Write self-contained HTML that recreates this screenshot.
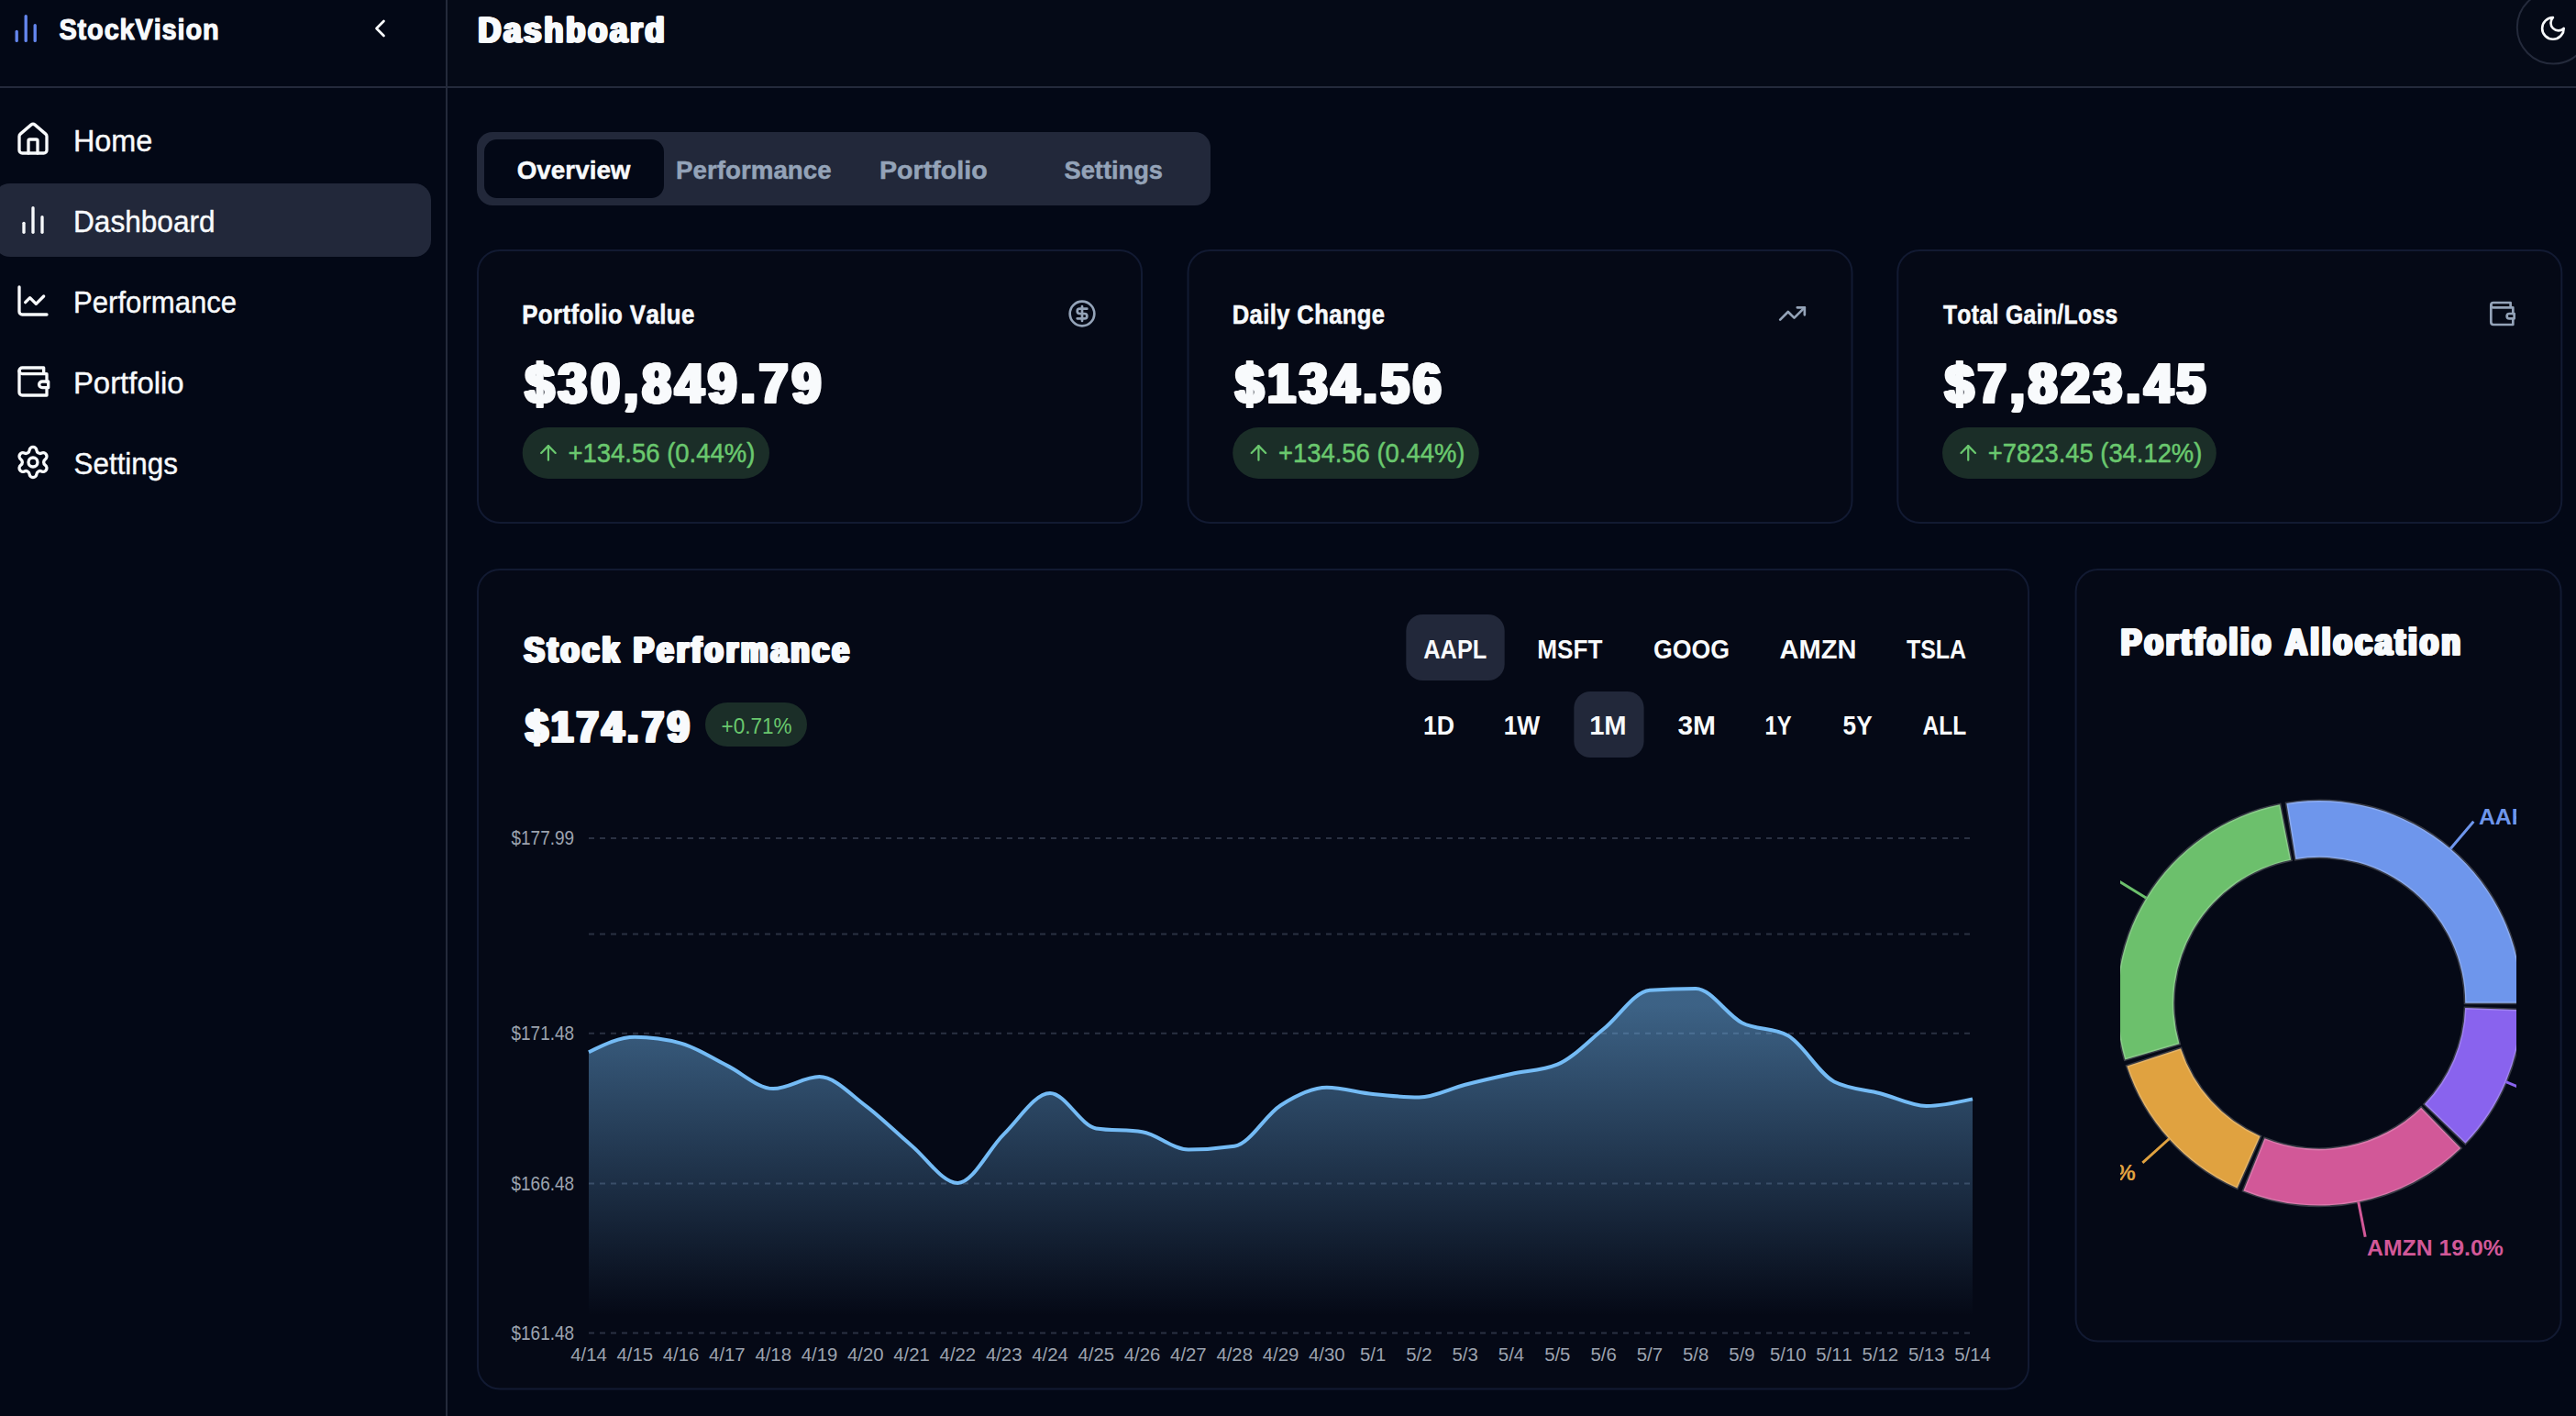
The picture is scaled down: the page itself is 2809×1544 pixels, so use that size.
<!DOCTYPE html>
<html><head><meta charset="utf-8"><title>StockVision Dashboard</title>
<style>html,body{margin:0;padding:0;background:#030816;width:2809px;height:1544px;overflow:hidden}</style>
</head><body>
<svg width="2809" height="1544" viewBox="0 0 2809 1544" style="display:block;font-family:'Liberation Sans', sans-serif;font-kerning:none">
<rect x="0" y="0" width="2809" height="1544" fill="#030816"/>
<rect x="488" y="0" width="2321" height="94" fill="#050a17"/>
<rect x="0" y="94" width="2809" height="2" fill="#242a3b"/>
<rect x="486" y="0" width="2" height="1544" fill="#242a3b"/>
<g transform="translate(8.20 11.10) scale(1.6667)" fill="none" stroke="#6486ee" stroke-width="2.00" stroke-linecap="round" stroke-linejoin="round"><path d="M18 20V10"/><path d="M12 20V4"/><path d="M6 20v-6"/></g>
<text transform="translate(64.47 43.40) scale(0.8967 1)" font-size="32.27" font-weight="bold" fill="#f8fafc" stroke="#f8fafc" stroke-width="1.20" stroke-linejoin="round" letter-spacing="0.96">StockVision</text>
<g transform="translate(398.50 15.00) scale(1.3333)" fill="none" stroke="#f8fafc" stroke-width="2.00" stroke-linecap="round" stroke-linejoin="round"><path d="m15 18-6-6 6-6"/></g>
<text transform="translate(520.30 46.40) scale(0.8758 1)" font-size="39.24" font-weight="bold" fill="#f8fafc" stroke="#f8fafc" stroke-width="1.20" stroke-linejoin="round" letter-spacing="3.36">Dashboard</text>
<text transform="translate(521.10 46.40) scale(0.8758 1)" font-size="39.24" font-weight="bold" fill="#f8fafc" stroke="#f8fafc" stroke-width="1.20" stroke-linejoin="round" letter-spacing="3.36">Dashboard</text>
<text transform="translate(521.90 46.40) scale(0.8758 1)" font-size="39.24" font-weight="bold" fill="#f8fafc" stroke="#f8fafc" stroke-width="1.20" stroke-linejoin="round" letter-spacing="3.36">Dashboard</text>
<text transform="translate(522.70 46.40) scale(0.8758 1)" font-size="39.24" font-weight="bold" fill="#f8fafc" stroke="#f8fafc" stroke-width="1.20" stroke-linejoin="round" letter-spacing="3.36">Dashboard</text>
<circle cx="2784.3" cy="30" r="39.5" fill="#050a17" stroke="#242a3b" stroke-width="2"/>
<g transform="translate(2768.20 15.20) scale(1.3100)" fill="none" stroke="#f8fafc" stroke-width="2.00" stroke-linecap="round" stroke-linejoin="round"><path d="M12 3a6 6 0 0 0 9 9 9 9 0 1 1-9-9Z"/></g>
<rect x="-7" y="200" width="477" height="80" rx="18" fill="#22283a"/>
<g transform="translate(16.00 132.00) scale(1.6667)" fill="none" stroke="#f8fafc" stroke-width="2.00" stroke-linecap="round" stroke-linejoin="round"><path d="M15 21v-8a1 1 0 0 0-1-1h-4a1 1 0 0 0-1 1v8"/><path d="M3 10a2 2 0 0 1 .709-1.528l7-5.999a2 2 0 0 1 2.582 0l7 5.999A2 2 0 0 1 21 10v9a2 2 0 0 1-2 2H5a2 2 0 0 1-2-2z"/></g>
<text transform="translate(79.94 165.10) scale(0.9688 1)" font-size="33.43" font-weight="normal" fill="#f8fafc" stroke="#f8fafc" stroke-width="0.40" stroke-linejoin="round">Home</text>
<g transform="translate(16.00 220.00) scale(1.6667)" fill="none" stroke="#f8fafc" stroke-width="2.00" stroke-linecap="round" stroke-linejoin="round"><path d="M18 20V10"/><path d="M12 20V4"/><path d="M6 20v-6"/></g>
<text transform="translate(80.01 252.60) scale(0.9455 1)" font-size="33.43" font-weight="normal" fill="#f8fafc" stroke="#f8fafc" stroke-width="0.40" stroke-linejoin="round">Dashboard</text>
<g transform="translate(16.00 308.00) scale(1.6667)" fill="none" stroke="#f8fafc" stroke-width="2.00" stroke-linecap="round" stroke-linejoin="round"><path d="M3 3v16a2 2 0 0 0 2 2h16"/><path d="m19 9-5 5-4-4-3 3"/></g>
<text transform="translate(80.05 341.00) scale(0.9308 1)" font-size="33.43" font-weight="normal" fill="#f8fafc" stroke="#f8fafc" stroke-width="0.40" stroke-linejoin="round">Performance</text>
<g transform="translate(16.00 396.00) scale(1.6667)" fill="none" stroke="#f8fafc" stroke-width="2.00" stroke-linecap="round" stroke-linejoin="round"><path d="M21 12V7H5a2 2 0 0 1 0-4h14v4"/><path d="M3 5v14a2 2 0 0 0 2 2h16v-5"/><path d="M18 12a2 2 0 0 0 0 4h4v-4Z"/></g>
<text transform="translate(79.90 428.80) scale(0.9849 1)" font-size="33.43" font-weight="normal" fill="#f8fafc" stroke="#f8fafc" stroke-width="0.40" stroke-linejoin="round">Portfolio</text>
<g transform="translate(16.00 484.00) scale(1.6667)" fill="none" stroke="#f8fafc" stroke-width="2.00" stroke-linecap="round" stroke-linejoin="round"><path d="M9.671 4.136a2.34 2.34 0 0 1 4.659 0 2.34 2.34 0 0 0 3.319 1.915 2.34 2.34 0 0 1 2.33 4.033 2.34 2.34 0 0 0 0 3.831 2.34 2.34 0 0 1-2.33 4.033 2.34 2.34 0 0 0-3.319 1.915 2.34 2.34 0 0 1-4.659 0 2.34 2.34 0 0 0-3.32-1.915 2.34 2.34 0 0 1-2.33-4.033 2.34 2.34 0 0 0 0-3.831A2.34 2.34 0 0 1 6.35 6.051a2.34 2.34 0 0 0 3.319-1.915"/><circle cx="12" cy="12" r="3"/></g>
<text transform="translate(80.58 516.80) scale(0.9384 1)" font-size="33.43" font-weight="normal" fill="#f8fafc" stroke="#f8fafc" stroke-width="0.40" stroke-linejoin="round">Settings</text>
<rect x="520" y="144" width="800" height="80" rx="17" fill="#22283a"/>
<rect x="528" y="152" width="196" height="64" rx="14" fill="#030816"/>
<text transform="translate(563.71 194.55) scale(0.9778 1)" font-size="28.49" font-weight="bold" fill="#f8fafc" stroke="#f8fafc" stroke-width="0.50" stroke-linejoin="round">Overview</text>
<text transform="translate(737.09 194.55) scale(0.9738 1)" font-size="28.49" font-weight="bold" fill="#94a3b8" stroke="#94a3b8" stroke-width="0.50" stroke-linejoin="round">Performance</text>
<text transform="translate(958.93 194.55) scale(1.0063 1)" font-size="28.49" font-weight="bold" fill="#94a3b8" stroke="#94a3b8" stroke-width="0.50" stroke-linejoin="round">Portfolio</text>
<text transform="translate(1160.46 194.55) scale(0.9575 1)" font-size="28.49" font-weight="bold" fill="#94a3b8" stroke="#94a3b8" stroke-width="0.50" stroke-linejoin="round">Settings</text>
<rect x="521.0" y="273" width="724" height="297" rx="24" fill="#050916" stroke="#121a32" stroke-width="2"/>
<text transform="translate(569.17 352.90) scale(0.8976 1)" font-size="28.78" font-weight="bold" fill="#f8fafc" stroke="#f8fafc" stroke-width="0.60" stroke-linejoin="round" letter-spacing="0.48">Portfolio Value</text>
<text transform="translate(571.16 439.10) scale(0.9142 1)" font-size="61.34" font-weight="bold" fill="#f8fafc" stroke="#f8fafc" stroke-width="1.80" stroke-linejoin="round" letter-spacing="5.04">$30,849.79</text>
<text transform="translate(571.88 439.10) scale(0.9142 1)" font-size="61.34" font-weight="bold" fill="#f8fafc" stroke="#f8fafc" stroke-width="1.80" stroke-linejoin="round" letter-spacing="5.04">$30,849.79</text>
<text transform="translate(572.60 439.10) scale(0.9142 1)" font-size="61.34" font-weight="bold" fill="#f8fafc" stroke="#f8fafc" stroke-width="1.80" stroke-linejoin="round" letter-spacing="5.04">$30,849.79</text>
<text transform="translate(573.32 439.10) scale(0.9142 1)" font-size="61.34" font-weight="bold" fill="#f8fafc" stroke="#f8fafc" stroke-width="1.80" stroke-linejoin="round" letter-spacing="5.04">$30,849.79</text>
<text transform="translate(574.04 439.10) scale(0.9142 1)" font-size="61.34" font-weight="bold" fill="#f8fafc" stroke="#f8fafc" stroke-width="1.80" stroke-linejoin="round" letter-spacing="5.04">$30,849.79</text>
<text transform="translate(574.76 439.10) scale(0.9142 1)" font-size="61.34" font-weight="bold" fill="#f8fafc" stroke="#f8fafc" stroke-width="1.80" stroke-linejoin="round" letter-spacing="5.04">$30,849.79</text>
<rect x="569.7" y="466" width="269.3" height="56" rx="28" fill="#1b2e28"/>
<g transform="translate(584.60 480.60) scale(1.1111)" fill="none" stroke="#6ac86e" stroke-width="2.00" stroke-linecap="round" stroke-linejoin="round"><path d="m5 12 7-7 7 7"/><path d="M12 19V5"/></g>
<text transform="translate(619.51 504.25) scale(0.9453 1)" font-size="29.07" font-weight="normal" fill="#6ac86e" stroke="#6ac86e" stroke-width="0.50" stroke-linejoin="round">+134.56 (0.44%)</text>
<g transform="translate(1164.00 326.00) scale(1.3333)" fill="none" stroke="#94a3b8" stroke-width="2.00" stroke-linecap="round" stroke-linejoin="round"><circle cx="12" cy="12" r="10"/><path d="M16 8h-6a2 2 0 1 0 0 4h4a2 2 0 1 1 0 4H8"/><path d="M12 18V6"/></g>
<rect x="1295.5" y="273" width="724" height="297" rx="24" fill="#050916" stroke="#121a32" stroke-width="2"/>
<text transform="translate(1343.69 352.90) scale(0.8864 1)" font-size="28.78" font-weight="bold" fill="#f8fafc" stroke="#f8fafc" stroke-width="0.60" stroke-linejoin="round" letter-spacing="0.48">Daily Change</text>
<text transform="translate(1345.68 439.10) scale(0.8882 1)" font-size="61.34" font-weight="bold" fill="#f8fafc" stroke="#f8fafc" stroke-width="1.80" stroke-linejoin="round" letter-spacing="5.04">$134.56</text>
<text transform="translate(1346.40 439.10) scale(0.8882 1)" font-size="61.34" font-weight="bold" fill="#f8fafc" stroke="#f8fafc" stroke-width="1.80" stroke-linejoin="round" letter-spacing="5.04">$134.56</text>
<text transform="translate(1347.12 439.10) scale(0.8882 1)" font-size="61.34" font-weight="bold" fill="#f8fafc" stroke="#f8fafc" stroke-width="1.80" stroke-linejoin="round" letter-spacing="5.04">$134.56</text>
<text transform="translate(1347.84 439.10) scale(0.8882 1)" font-size="61.34" font-weight="bold" fill="#f8fafc" stroke="#f8fafc" stroke-width="1.80" stroke-linejoin="round" letter-spacing="5.04">$134.56</text>
<text transform="translate(1348.56 439.10) scale(0.8882 1)" font-size="61.34" font-weight="bold" fill="#f8fafc" stroke="#f8fafc" stroke-width="1.80" stroke-linejoin="round" letter-spacing="5.04">$134.56</text>
<text transform="translate(1349.28 439.10) scale(0.8882 1)" font-size="61.34" font-weight="bold" fill="#f8fafc" stroke="#f8fafc" stroke-width="1.80" stroke-linejoin="round" letter-spacing="5.04">$134.56</text>
<rect x="1344.2" y="466" width="268.6" height="56" rx="28" fill="#1b2e28"/>
<g transform="translate(1359.10 480.60) scale(1.1111)" fill="none" stroke="#6ac86e" stroke-width="2.00" stroke-linecap="round" stroke-linejoin="round"><path d="m5 12 7-7 7 7"/><path d="M12 19V5"/></g>
<text transform="translate(1394.01 504.25) scale(0.9429 1)" font-size="29.07" font-weight="normal" fill="#6ac86e" stroke="#6ac86e" stroke-width="0.50" stroke-linejoin="round">+134.56 (0.44%)</text>
<g transform="translate(1938.50 326.00) scale(1.3333)" fill="none" stroke="#94a3b8" stroke-width="2.00" stroke-linecap="round" stroke-linejoin="round"><path d="M22 7 13.5 15.5 8.5 10.5 2 17"/><path d="M16 7h6v6"/></g>
<rect x="2069.3" y="273" width="724" height="297" rx="24" fill="#050916" stroke="#121a32" stroke-width="2"/>
<text transform="translate(2118.92 352.90) scale(0.8558 1)" font-size="28.78" font-weight="bold" fill="#f8fafc" stroke="#f8fafc" stroke-width="0.60" stroke-linejoin="round" letter-spacing="0.48">Total Gain/Loss</text>
<text transform="translate(2119.47 439.10) scale(0.9054 1)" font-size="61.34" font-weight="bold" fill="#f8fafc" stroke="#f8fafc" stroke-width="1.80" stroke-linejoin="round" letter-spacing="5.04">$7,823.45</text>
<text transform="translate(2120.19 439.10) scale(0.9054 1)" font-size="61.34" font-weight="bold" fill="#f8fafc" stroke="#f8fafc" stroke-width="1.80" stroke-linejoin="round" letter-spacing="5.04">$7,823.45</text>
<text transform="translate(2120.91 439.10) scale(0.9054 1)" font-size="61.34" font-weight="bold" fill="#f8fafc" stroke="#f8fafc" stroke-width="1.80" stroke-linejoin="round" letter-spacing="5.04">$7,823.45</text>
<text transform="translate(2121.63 439.10) scale(0.9054 1)" font-size="61.34" font-weight="bold" fill="#f8fafc" stroke="#f8fafc" stroke-width="1.80" stroke-linejoin="round" letter-spacing="5.04">$7,823.45</text>
<text transform="translate(2122.35 439.10) scale(0.9054 1)" font-size="61.34" font-weight="bold" fill="#f8fafc" stroke="#f8fafc" stroke-width="1.80" stroke-linejoin="round" letter-spacing="5.04">$7,823.45</text>
<text transform="translate(2123.07 439.10) scale(0.9054 1)" font-size="61.34" font-weight="bold" fill="#f8fafc" stroke="#f8fafc" stroke-width="1.80" stroke-linejoin="round" letter-spacing="5.04">$7,823.45</text>
<rect x="2118.0" y="466" width="298.8" height="56" rx="28" fill="#1b2e28"/>
<g transform="translate(2132.90 480.60) scale(1.1111)" fill="none" stroke="#6ac86e" stroke-width="2.00" stroke-linecap="round" stroke-linejoin="round"><path d="m5 12 7-7 7 7"/><path d="M12 19V5"/></g>
<text transform="translate(2167.81 504.25) scale(0.9417 1)" font-size="29.07" font-weight="normal" fill="#6ac86e" stroke="#6ac86e" stroke-width="0.50" stroke-linejoin="round">+7823.45 (34.12%)</text>
<g transform="translate(2712.30 326.00) scale(1.3333)" fill="none" stroke="#94a3b8" stroke-width="2.00" stroke-linecap="round" stroke-linejoin="round"><path d="M21 12V7H5a2 2 0 0 1 0-4h14v4"/><path d="M3 5v14a2 2 0 0 0 2 2h16v-5"/><path d="M18 12a2 2 0 0 0 0 4h4v-4Z"/></g>
<rect x="521" y="621" width="1691" height="893.5" rx="24" fill="#050916" stroke="#121a32" stroke-width="2"/>
<text transform="translate(570.35 721.60) scale(0.8306 1)" font-size="39.54" font-weight="bold" fill="#f8fafc" stroke="#f8fafc" stroke-width="1.40" stroke-linejoin="round" letter-spacing="4.12">Stock Performance</text>
<text transform="translate(571.10 721.60) scale(0.8306 1)" font-size="39.54" font-weight="bold" fill="#f8fafc" stroke="#f8fafc" stroke-width="1.40" stroke-linejoin="round" letter-spacing="4.12">Stock Performance</text>
<text transform="translate(571.85 721.60) scale(0.8306 1)" font-size="39.54" font-weight="bold" fill="#f8fafc" stroke="#f8fafc" stroke-width="1.40" stroke-linejoin="round" letter-spacing="4.12">Stock Performance</text>
<text transform="translate(572.60 721.60) scale(0.8306 1)" font-size="39.54" font-weight="bold" fill="#f8fafc" stroke="#f8fafc" stroke-width="1.40" stroke-linejoin="round" letter-spacing="4.12">Stock Performance</text>
<text transform="translate(573.35 721.60) scale(0.8306 1)" font-size="39.54" font-weight="bold" fill="#f8fafc" stroke="#f8fafc" stroke-width="1.40" stroke-linejoin="round" letter-spacing="4.12">Stock Performance</text>
<text transform="translate(571.94 809.20) scale(0.9003 1)" font-size="47.24" font-weight="bold" fill="#f8fafc" stroke="#f8fafc" stroke-width="1.60" stroke-linejoin="round" letter-spacing="4.48">$174.79</text>
<text transform="translate(572.74 809.20) scale(0.9003 1)" font-size="47.24" font-weight="bold" fill="#f8fafc" stroke="#f8fafc" stroke-width="1.60" stroke-linejoin="round" letter-spacing="4.48">$174.79</text>
<text transform="translate(573.54 809.20) scale(0.9003 1)" font-size="47.24" font-weight="bold" fill="#f8fafc" stroke="#f8fafc" stroke-width="1.60" stroke-linejoin="round" letter-spacing="4.48">$174.79</text>
<text transform="translate(574.34 809.20) scale(0.9003 1)" font-size="47.24" font-weight="bold" fill="#f8fafc" stroke="#f8fafc" stroke-width="1.60" stroke-linejoin="round" letter-spacing="4.48">$174.79</text>
<text transform="translate(575.14 809.20) scale(0.9003 1)" font-size="47.24" font-weight="bold" fill="#f8fafc" stroke="#f8fafc" stroke-width="1.60" stroke-linejoin="round" letter-spacing="4.48">$174.79</text>
<rect x="769" y="766" width="111" height="48" rx="24" fill="#1b2e28"/>
<text transform="translate(786.60 799.80) scale(0.9517 1)" font-size="23.69" font-weight="normal" fill="#6ac86e">+0.71%</text>
<rect x="1533.3" y="670" width="107.4" height="72" rx="18" fill="#22283a"/>
<text transform="translate(1552.27 717.50) scale(0.8562 1)" font-size="29.65" font-weight="bold" fill="#f8fafc">AAPL</text>
<text transform="translate(1676.25 717.50) scale(0.8814 1)" font-size="29.65" font-weight="bold" fill="#f8fafc">MSFT</text>
<text transform="translate(1803.00 717.50) scale(0.9013 1)" font-size="29.65" font-weight="bold" fill="#f8fafc">GOOG</text>
<text transform="translate(1940.58 717.50) scale(0.9795 1)" font-size="29.65" font-weight="bold" fill="#f8fafc">AMZN</text>
<text transform="translate(2078.92 717.50) scale(0.8427 1)" font-size="29.65" font-weight="bold" fill="#f8fafc">TSLA</text>
<rect x="1716.3" y="754" width="76.3" height="72" rx="18" fill="#22283a"/>
<text transform="translate(1552.02 801.40) scale(0.9131 1)" font-size="29.22" font-weight="bold" fill="#f8fafc">1D</text>
<text transform="translate(1639.63 801.40) scale(0.9057 1)" font-size="29.22" font-weight="bold" fill="#f8fafc">1W</text>
<text transform="translate(1733.16 801.40) scale(0.9975 1)" font-size="29.22" font-weight="bold" fill="#f8fafc">1M</text>
<text transform="translate(1829.41 801.40) scale(1.0248 1)" font-size="29.22" font-weight="bold" fill="#f8fafc">3M</text>
<text transform="translate(1924.50 801.40) scale(0.8168 1)" font-size="29.22" font-weight="bold" fill="#f8fafc">1Y</text>
<text transform="translate(2009.59 801.40) scale(0.8962 1)" font-size="29.22" font-weight="bold" fill="#f8fafc">5Y</text>
<text transform="translate(2096.59 801.40) scale(0.8393 1)" font-size="29.22" font-weight="bold" fill="#f8fafc">ALL</text>
<defs><linearGradient id="fillg" x1="0" y1="1076.9" x2="0" y2="1453.6" gradientUnits="userSpaceOnUse"><stop offset="0.05" stop-color="#74bbf5" stop-opacity="0.5"/><stop offset="0.95" stop-color="#74bbf5" stop-opacity="0"/></linearGradient></defs>
<line x1="642" y1="913.9" x2="2151" y2="913.9" stroke="#2a3142" stroke-width="2" stroke-dasharray="6 6"/>
<line x1="642" y1="1018.5" x2="2151" y2="1018.5" stroke="#2a3142" stroke-width="2" stroke-dasharray="6 6"/>
<line x1="642" y1="1126.8" x2="2151" y2="1126.8" stroke="#2a3142" stroke-width="2" stroke-dasharray="6 6"/>
<line x1="642" y1="1290.5" x2="2151" y2="1290.5" stroke="#2a3142" stroke-width="2" stroke-dasharray="6 6"/>
<line x1="642" y1="1453.6" x2="2151" y2="1453.6" stroke="#2a3142" stroke-width="2" stroke-dasharray="6 6"/>
<path d="M642.00,1147.30C658.77,1139.05 675.53,1130.80 692.30,1130.80C709.07,1130.80 725.83,1133.07 742.60,1137.60C759.37,1142.13 776.13,1153.65 792.90,1161.90C809.67,1170.15 826.43,1187.10 843.20,1187.10C859.97,1187.10 876.73,1174.10 893.50,1174.10C910.27,1174.10 927.03,1193.08 943.80,1205.60C960.57,1218.12 977.33,1235.13 994.10,1249.20C1010.87,1263.27 1027.63,1290.00 1044.40,1290.00C1061.17,1290.00 1077.93,1252.93 1094.70,1236.60C1111.47,1220.27 1128.23,1192.00 1145.00,1192.00C1161.77,1192.00 1178.53,1227.80 1195.30,1230.40C1212.07,1233.00 1228.83,1231.70 1245.60,1234.30C1262.37,1236.90 1279.13,1253.50 1295.90,1253.50C1312.67,1253.50 1329.43,1252.27 1346.20,1249.80C1362.97,1247.33 1379.73,1215.87 1396.50,1205.20C1413.27,1194.53 1430.03,1185.80 1446.80,1185.80C1463.57,1185.80 1480.33,1191.22 1497.10,1193.00C1513.87,1194.78 1530.63,1196.50 1547.40,1196.50C1564.17,1196.50 1580.93,1186.95 1597.70,1182.70C1614.47,1178.45 1631.23,1174.67 1648.00,1171.00C1664.77,1167.33 1681.53,1167.57 1698.30,1160.70C1715.07,1153.83 1731.83,1135.48 1748.60,1122.00C1765.37,1108.52 1782.13,1081.07 1798.90,1079.80C1815.67,1078.53 1832.43,1077.90 1849.20,1077.90C1865.97,1077.90 1882.73,1106.63 1899.50,1115.20C1916.27,1123.77 1933.03,1119.90 1949.80,1129.30C1966.57,1138.70 1983.33,1171.03 2000.10,1179.50C2016.87,1187.97 2033.63,1187.78 2050.40,1192.20C2067.17,1196.62 2083.93,1206.00 2100.70,1206.00C2117.47,1206.00 2134.23,1202.20 2151.00,1198.40 L2151.00,1453.60 L642.00,1453.60 Z" fill="url(#fillg)"/>
<path d="M642.00,1147.30C658.77,1139.05 675.53,1130.80 692.30,1130.80C709.07,1130.80 725.83,1133.07 742.60,1137.60C759.37,1142.13 776.13,1153.65 792.90,1161.90C809.67,1170.15 826.43,1187.10 843.20,1187.10C859.97,1187.10 876.73,1174.10 893.50,1174.10C910.27,1174.10 927.03,1193.08 943.80,1205.60C960.57,1218.12 977.33,1235.13 994.10,1249.20C1010.87,1263.27 1027.63,1290.00 1044.40,1290.00C1061.17,1290.00 1077.93,1252.93 1094.70,1236.60C1111.47,1220.27 1128.23,1192.00 1145.00,1192.00C1161.77,1192.00 1178.53,1227.80 1195.30,1230.40C1212.07,1233.00 1228.83,1231.70 1245.60,1234.30C1262.37,1236.90 1279.13,1253.50 1295.90,1253.50C1312.67,1253.50 1329.43,1252.27 1346.20,1249.80C1362.97,1247.33 1379.73,1215.87 1396.50,1205.20C1413.27,1194.53 1430.03,1185.80 1446.80,1185.80C1463.57,1185.80 1480.33,1191.22 1497.10,1193.00C1513.87,1194.78 1530.63,1196.50 1547.40,1196.50C1564.17,1196.50 1580.93,1186.95 1597.70,1182.70C1614.47,1178.45 1631.23,1174.67 1648.00,1171.00C1664.77,1167.33 1681.53,1167.57 1698.30,1160.70C1715.07,1153.83 1731.83,1135.48 1748.60,1122.00C1765.37,1108.52 1782.13,1081.07 1798.90,1079.80C1815.67,1078.53 1832.43,1077.90 1849.20,1077.90C1865.97,1077.90 1882.73,1106.63 1899.50,1115.20C1916.27,1123.77 1933.03,1119.90 1949.80,1129.30C1966.57,1138.70 1983.33,1171.03 2000.10,1179.50C2016.87,1187.97 2033.63,1187.78 2050.40,1192.20C2067.17,1196.62 2083.93,1206.00 2100.70,1206.00C2117.47,1206.00 2134.23,1202.20 2151.00,1198.40" fill="none" stroke="#74bbf5" stroke-width="4"/>
<text transform="translate(557.50 921.30) scale(0.8956 1)" font-size="21.22" font-weight="normal" fill="#9ca3af">$177.99</text>
<text transform="translate(557.50 1134.20) scale(0.8947 1)" font-size="21.22" font-weight="normal" fill="#9ca3af">$171.48</text>
<text transform="translate(557.50 1297.90) scale(0.8947 1)" font-size="21.22" font-weight="normal" fill="#9ca3af">$166.48</text>
<text transform="translate(557.50 1461.00) scale(0.8947 1)" font-size="21.22" font-weight="normal" fill="#9ca3af">$161.48</text>
<text x="642.00" y="1484.1" font-size="20.35" fill="#9ca3af" text-anchor="middle">4/14</text>
<text x="692.30" y="1484.1" font-size="20.35" fill="#9ca3af" text-anchor="middle">4/15</text>
<text x="742.60" y="1484.1" font-size="20.35" fill="#9ca3af" text-anchor="middle">4/16</text>
<text x="792.90" y="1484.1" font-size="20.35" fill="#9ca3af" text-anchor="middle">4/17</text>
<text x="843.20" y="1484.1" font-size="20.35" fill="#9ca3af" text-anchor="middle">4/18</text>
<text x="893.50" y="1484.1" font-size="20.35" fill="#9ca3af" text-anchor="middle">4/19</text>
<text x="943.80" y="1484.1" font-size="20.35" fill="#9ca3af" text-anchor="middle">4/20</text>
<text x="994.10" y="1484.1" font-size="20.35" fill="#9ca3af" text-anchor="middle">4/21</text>
<text x="1044.40" y="1484.1" font-size="20.35" fill="#9ca3af" text-anchor="middle">4/22</text>
<text x="1094.70" y="1484.1" font-size="20.35" fill="#9ca3af" text-anchor="middle">4/23</text>
<text x="1145.00" y="1484.1" font-size="20.35" fill="#9ca3af" text-anchor="middle">4/24</text>
<text x="1195.30" y="1484.1" font-size="20.35" fill="#9ca3af" text-anchor="middle">4/25</text>
<text x="1245.60" y="1484.1" font-size="20.35" fill="#9ca3af" text-anchor="middle">4/26</text>
<text x="1295.90" y="1484.1" font-size="20.35" fill="#9ca3af" text-anchor="middle">4/27</text>
<text x="1346.20" y="1484.1" font-size="20.35" fill="#9ca3af" text-anchor="middle">4/28</text>
<text x="1396.50" y="1484.1" font-size="20.35" fill="#9ca3af" text-anchor="middle">4/29</text>
<text x="1446.80" y="1484.1" font-size="20.35" fill="#9ca3af" text-anchor="middle">4/30</text>
<text x="1497.10" y="1484.1" font-size="20.35" fill="#9ca3af" text-anchor="middle">5/1</text>
<text x="1547.40" y="1484.1" font-size="20.35" fill="#9ca3af" text-anchor="middle">5/2</text>
<text x="1597.70" y="1484.1" font-size="20.35" fill="#9ca3af" text-anchor="middle">5/3</text>
<text x="1648.00" y="1484.1" font-size="20.35" fill="#9ca3af" text-anchor="middle">5/4</text>
<text x="1698.30" y="1484.1" font-size="20.35" fill="#9ca3af" text-anchor="middle">5/5</text>
<text x="1748.60" y="1484.1" font-size="20.35" fill="#9ca3af" text-anchor="middle">5/6</text>
<text x="1798.90" y="1484.1" font-size="20.35" fill="#9ca3af" text-anchor="middle">5/7</text>
<text x="1849.20" y="1484.1" font-size="20.35" fill="#9ca3af" text-anchor="middle">5/8</text>
<text x="1899.50" y="1484.1" font-size="20.35" fill="#9ca3af" text-anchor="middle">5/9</text>
<text x="1949.80" y="1484.1" font-size="20.35" fill="#9ca3af" text-anchor="middle">5/10</text>
<text x="2000.10" y="1484.1" font-size="20.35" fill="#9ca3af" text-anchor="middle">5/11</text>
<text x="2050.40" y="1484.1" font-size="20.35" fill="#9ca3af" text-anchor="middle">5/12</text>
<text x="2100.70" y="1484.1" font-size="20.35" fill="#9ca3af" text-anchor="middle">5/13</text>
<text x="2151.00" y="1484.1" font-size="20.35" fill="#9ca3af" text-anchor="middle">5/14</text>
<rect x="2263.6" y="621" width="529" height="841.5" rx="24" fill="#050916" stroke="#121a32" stroke-width="2"/>
<text transform="translate(2311.38 713.70) scale(0.8109 1)" font-size="40.99" font-weight="bold" fill="#f8fafc" stroke="#f8fafc" stroke-width="1.40" stroke-linejoin="round" letter-spacing="4.12">Portfolio Allocation</text>
<text transform="translate(2312.13 713.70) scale(0.8109 1)" font-size="40.99" font-weight="bold" fill="#f8fafc" stroke="#f8fafc" stroke-width="1.40" stroke-linejoin="round" letter-spacing="4.12">Portfolio Allocation</text>
<text transform="translate(2312.88 713.70) scale(0.8109 1)" font-size="40.99" font-weight="bold" fill="#f8fafc" stroke="#f8fafc" stroke-width="1.40" stroke-linejoin="round" letter-spacing="4.12">Portfolio Allocation</text>
<text transform="translate(2313.63 713.70) scale(0.8109 1)" font-size="40.99" font-weight="bold" fill="#f8fafc" stroke="#f8fafc" stroke-width="1.40" stroke-linejoin="round" letter-spacing="4.12">Portfolio Allocation</text>
<text transform="translate(2314.38 713.70) scale(0.8109 1)" font-size="40.99" font-weight="bold" fill="#f8fafc" stroke="#f8fafc" stroke-width="1.40" stroke-linejoin="round" letter-spacing="4.12">Portfolio Allocation</text>
<defs><clipPath id="pclip"><rect x="2312" y="740" width="432" height="700"/></clipPath></defs>
<g clip-path="url(#pclip)">
<path d="M2750.00,1093.80 A220.80,220.80 0 0 0 2493.33,875.93 L2503.37,936.91 A159.00,159.00 0 0 1 2688.20,1093.80 Z" fill="#6e96ec" stroke="rgba(255,255,255,0.2)" stroke-width="3"/>
<line x1="2672.09" y1="925.47" x2="2697.32" y2="895.73" stroke="#6e96ec" stroke-width="3"/>
<path d="M2486.13,877.24 A220.80,220.80 0 0 0 2317.17,1155.40 L2376.51,1138.16 A159.00,159.00 0 0 1 2498.18,937.85 Z" fill="#6cc06c" stroke="rgba(255,255,255,0.2)" stroke-width="3"/>
<line x1="2340.49" y1="979.17" x2="2307.15" y2="958.92" stroke="#6cc06c" stroke-width="3"/>
<path d="M2319.33,1162.40 A220.80,220.80 0 0 0 2439.57,1295.59 L2464.66,1239.11 A159.00,159.00 0 0 1 2378.07,1143.20 Z" fill="#e0a240" stroke="rgba(255,255,255,0.2)" stroke-width="3"/>
<line x1="2365.31" y1="1241.76" x2="2336.36" y2="1267.89" stroke="#e0a240" stroke-width="3"/>
<path d="M2446.31,1298.45 A220.80,220.80 0 0 0 2683.27,1251.96 L2640.15,1207.69 A159.00,159.00 0 0 1 2469.51,1241.17 Z" fill="#d25898" stroke="rgba(255,255,255,0.2)" stroke-width="3"/>
<line x1="2571.71" y1="1310.47" x2="2579.22" y2="1348.74" stroke="#d25898" stroke-width="3"/>
<path d="M2688.43,1246.77 A220.80,220.80 0 0 0 2749.88,1101.12 L2688.11,1099.07 A159.00,159.00 0 0 1 2643.86,1203.95 Z" fill="#8963ee" stroke="rgba(255,255,255,0.2)" stroke-width="3"/>
<line x1="2732.63" y1="1179.63" x2="2768.57" y2="1194.79" stroke="#8963ee" stroke-width="3"/>
<text transform="translate(2581.08 1368.70) scale(1.0219 1)" font-size="24.27" font-weight="bold" fill="#d25898">AMZN 19.0%</text>
<text transform="translate(2702.88 899.00) scale(1.0219 1)" font-size="24.27" font-weight="bold" fill="#6e96ec">AAPL 28.0%</text>
<text transform="translate(2174.45 1286.90) scale(1.0219 1)" font-size="24.27" font-weight="bold" fill="#e0a240">GOOG 14.0%</text>
<text transform="translate(2145.91 950.00) scale(1.0219 1)" font-size="24.27" font-weight="bold" fill="#6cc06c">MSFT 27.0%</text>
<text transform="translate(2779.72 1200.00) scale(1.0219 1)" font-size="24.27" font-weight="bold" fill="#8963ee">TSLA 12.0%</text>
</g>
</svg>
</body></html>
